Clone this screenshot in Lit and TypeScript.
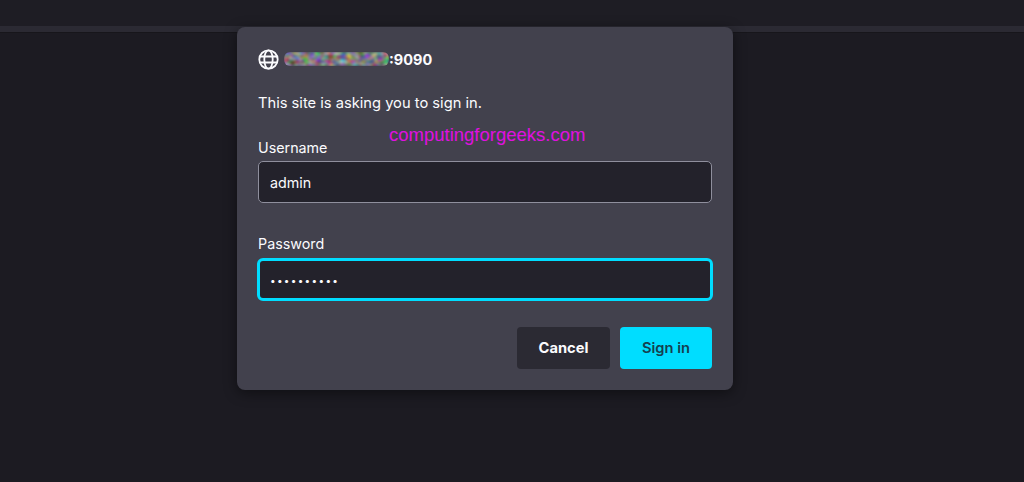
import { LitElement, html, css } from "lit";
import { customElement } from "lit/decorators.js";

@customElement("app-root")
export class AppRoot extends LitElement {
  static styles = css`
    :host {
      display: block;
      position: relative;
      width: 1024px;
      height: 482px;
      overflow: hidden;
      background: #1c1b22;
      font-family: Inter, "Liberation Sans", sans-serif;
      color: #fbfbfe;
    }
    .toolbar {
      height: 26px;
      background: #1e1d24;
      border-bottom: 6px solid #2b2a33;
      box-shadow: 0 1px 0 #17161b;
    }
    .dialog {
      position: absolute;
      left: 237px;
      top: 27px;
      width: 496px;
      height: 363px;
      box-sizing: border-box;
      padding: 22px 21px 21px;
      background: #42414d;
      border-radius: 8px;
      box-shadow: 0 3px 14px rgba(0, 0, 0, 0.45);
      display: flex;
      flex-direction: column;
    }
    .origin {
      display: flex;
      align-items: center;
      height: 20px;
      font-size: 14.5px;
      font-weight: 700;
    }
    .globe {
      width: 21px;
      height: 21px;
      margin-right: 5px;
      flex: none;
    }
    .smudge {
      width: 105px;
      height: 16px;
      flex: none;
      display: block;
    }
    .message {
      margin-top: 25px;
      font-size: 14.7px;
      line-height: 18px;
    }
    .label {
      font-size: 14.3px;
      line-height: 18px;
    }
    .label.user {
      margin-top: 27px;
    }
    .label.pass {
      margin-top: 32px;
    }
    .field {
      margin-top: 4px;
      width: 454px;
      height: 42px;
      box-sizing: border-box;
      display: flex;
      align-items: center;
      padding: 0 11px;
      background: #23222b;
      border: 1.5px solid #8f8f9d;
      border-radius: 5px;
      font-size: 14.3px;
    }
    .field.focus {
      margin-top: 5px;
      height: 43px;
      width: 456px;
      margin-left: -1px;
      border: 3px solid #00ddff;
      border-radius: 6px;
      padding: 0 10px;
      font-size: 10px;
      letter-spacing: 1.3px;
    }
    .actions {
      margin-top: 26px;
      display: flex;
      justify-content: flex-end;
      gap: 10px;
      width: 454px;
    }
    .btn {
      height: 42px;
      display: flex;
      align-items: center;
      justify-content: center;
      border-radius: 4px;
      font-size: 14.7px;
      font-weight: 600;
    }
    .cancel {
      width: 93px;
      background: #2b2a33;
      color: #fbfbfe;
      font-weight: 700;
    }
    .signin {
      width: 92px;
      background: #00ddff;
      color: #15404f;
    }
    .watermark {
      position: absolute;
      left: 389px;
      top: 124px;
      font-family: "Liberation Sans", Arial, sans-serif;
      font-size: 18.5px;
      line-height: 21px;
      color: #e010e0;
    }
  `;

  render() {
    return html`
      <div class="toolbar"></div>
      <div class="dialog">
        <div class="origin">
          <svg class="globe" viewBox="0 0 21 21" fill="none" stroke="#fbfbfe" stroke-width="1.8">
            <circle cx="10.5" cy="10.5" r="9.2"></circle>
            <ellipse cx="10.5" cy="10.5" rx="4.2" ry="9.2"></ellipse>
            <path d="M1.8 7.5h17.4M1.8 13.5h17.4"></path>
          </svg>
          <svg class="smudge" viewBox="0 0 105 16">
            <defs>
              <filter id="speckle" x="0" y="0" width="100%" height="100%" color-interpolation-filters="sRGB">
                <feTurbulence type="fractalNoise" baseFrequency="0.16 0.22" numOctaves="2" seed="7" result="n"></feTurbulence>
                <feColorMatrix in="n" type="matrix"
                  values="1.1 0 0 0 -0.05  0 1.1 0 0 -0.06  0 0 1.1 0 -0.03  0 0 0 0 1"></feColorMatrix>
                <feGaussianBlur stdDeviation="0.9"></feGaussianBlur>
                <feComposite in2="SourceAlpha" operator="in"></feComposite>
              </filter>
            </defs>
            <rect x="0" y="1" width="105" height="14" rx="6" fill="#807e88" filter="url(#speckle)"></rect>
          </svg>
          <span>:9090</span>
        </div>
        <div class="message">This site is asking you to sign in.</div>
        <div class="label user">Username</div>
        <div class="field">admin</div>
        <div class="label pass">Password</div>
        <div class="field focus">••••••••••</div>
        <div class="actions">
          <div class="btn cancel">Cancel</div>
          <div class="btn signin">Sign in</div>
        </div>
      </div>
      <div class="watermark">computingforgeeks.com</div>
    `;
  }
}
